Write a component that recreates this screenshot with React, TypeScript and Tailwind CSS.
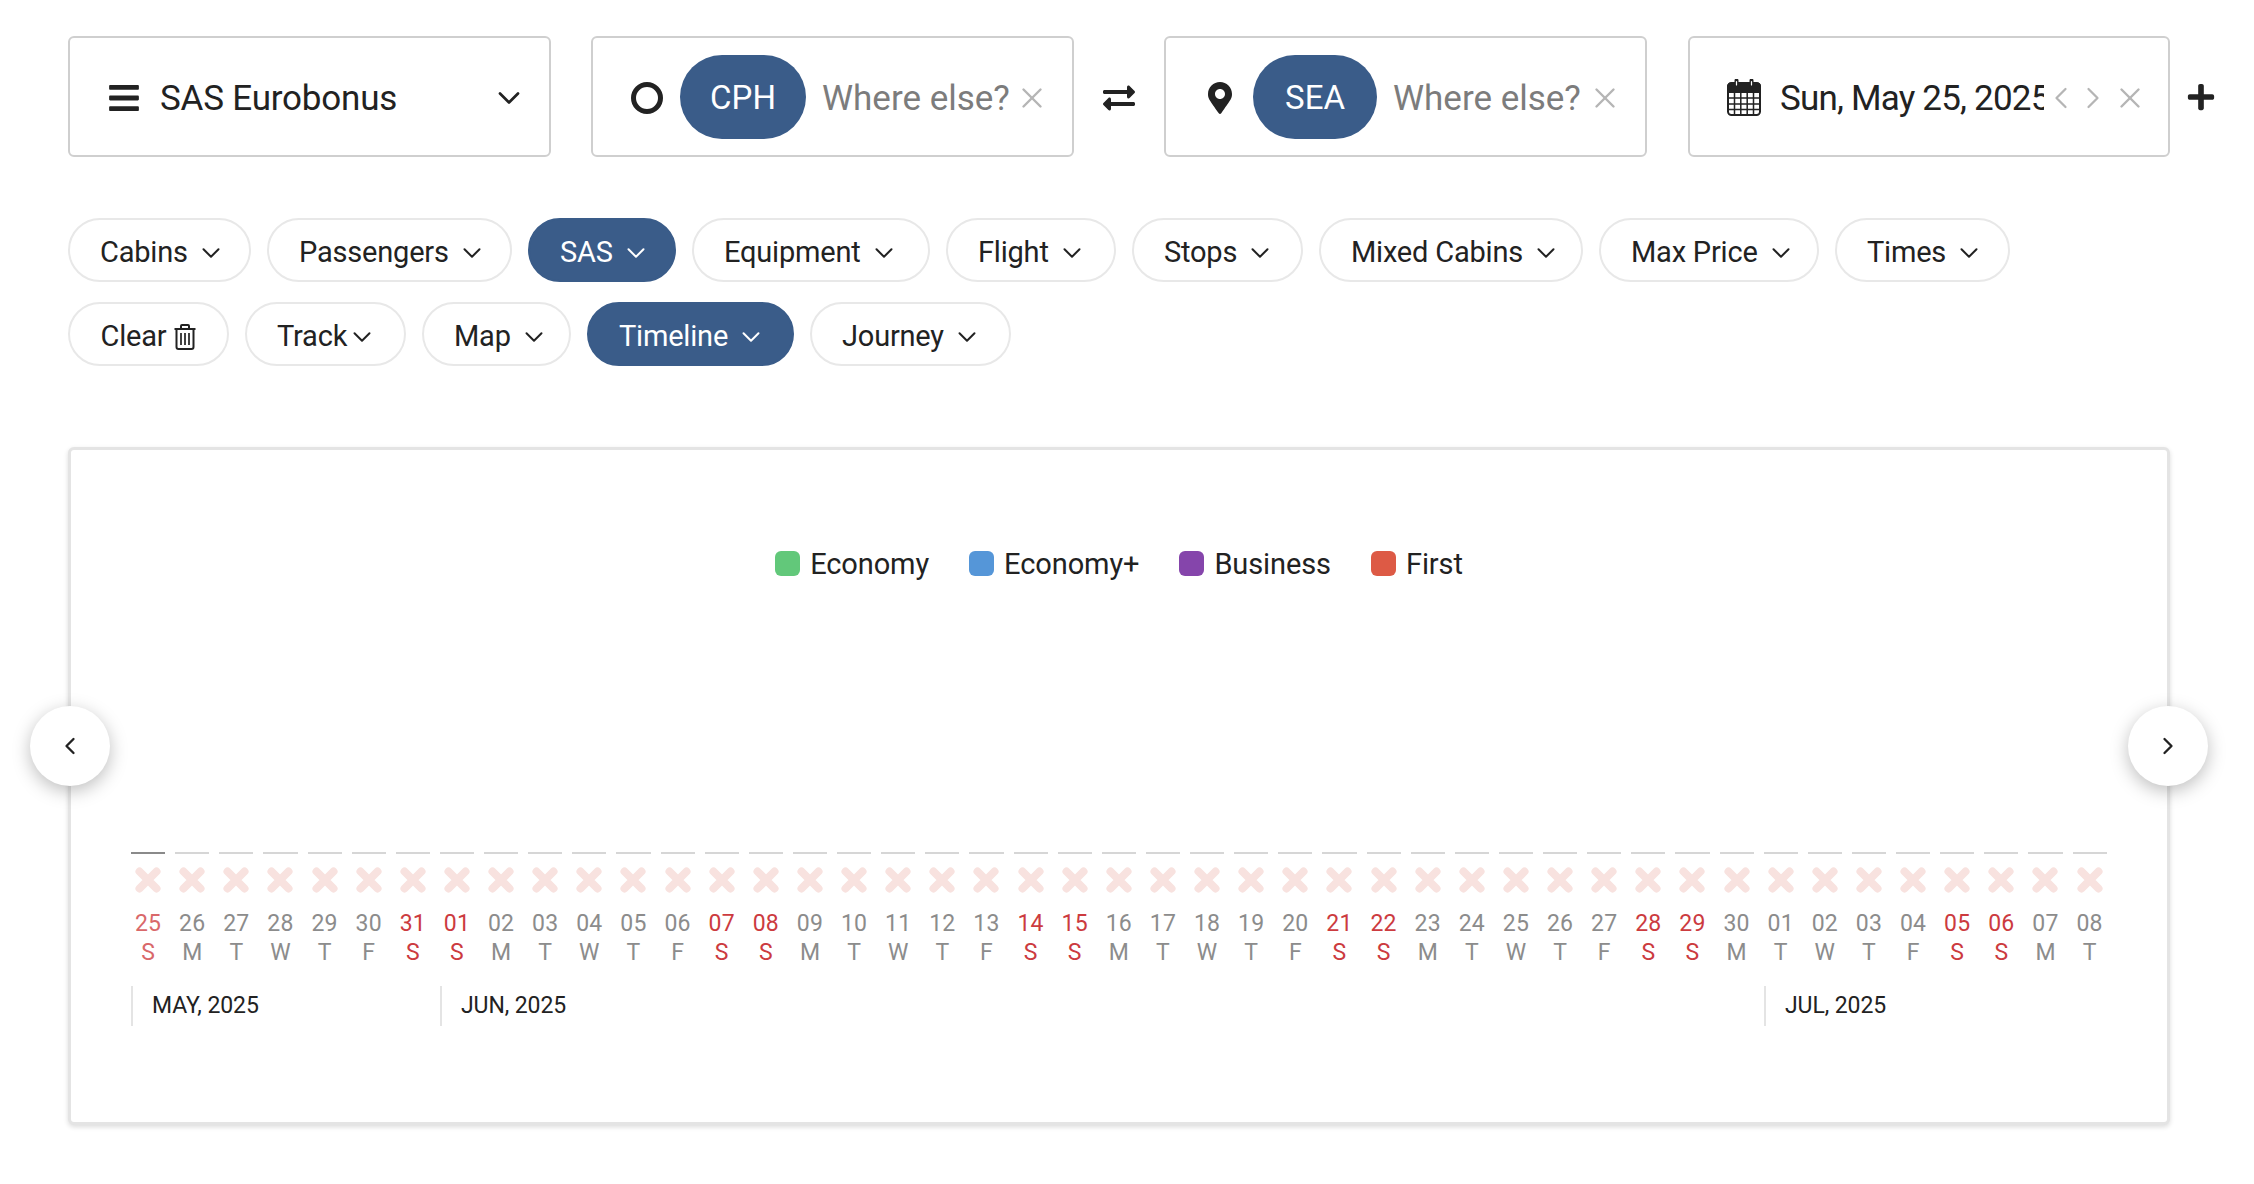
import React from "react";
import { ChevronDown, ChevronLeft, ChevronRight, X } from "lucide-react";
import { FaBars, FaExchangeAlt, FaMapMarkerAlt, FaPlus } from "react-icons/fa";

const chipsRow1 = [
  { t: "Cabins", w: "w-[183px]" },
  { t: "Passengers", w: "w-[245px]" },
  { t: "SAS", w: "w-[148px]", on: true },
  { t: "Equipment", w: "w-[238px]" },
  { t: "Flight", w: "w-[170px]" },
  { t: "Stops", w: "w-[171px]" },
  { t: "Mixed Cabins", w: "w-[264px]" },
  { t: "Max Price", w: "w-[220px]" },
  { t: "Times", w: "w-[175px]" },
];
const chipsRow2 = [
  { t: "Track", w: "w-[161px]", tight: true },
  { t: "Map", w: "w-[149px]" },
  { t: "Timeline", w: "w-[207px]", on: true },
  { t: "Journey", w: "w-[201px]" },
];

function Chip({ t, w, on, tight }: { t: string; w: string; on?: boolean; tight?: boolean }) {
  return (
    <button
      className={`${w} h-16 pl-[30px] pt-[5px] rounded-full flex items-center justify-start text-[29px] tracking-[-0.2px] border-2 ${tight ? "gap-0" : "gap-2"} ${
        on ? "bg-[#3a5c89] border-[#3a5c89] text-white" : "bg-white border-[#e8e8e8] text-[#222222]"
      }`}
    >
      <span>{t}</span>
      <ChevronDown size={30} strokeWidth={1.6} />
    </button>
  );
}

function Calendar() {
  return (
    <svg width="34" height="37" viewBox="0 0 34 37" fill="none" stroke="#222" strokeWidth="2" className="shrink-0">
      <rect x="1" y="4" width="32" height="32" rx="3.500" />
      <path d="M1 7.500a3 3 0 0 1 3-3h26a3 3 0 0 1 3 3V13H1z" fill="#222" />
      <path d="M1 19h32M1 25h32M1 30.500h32M7.500 13v22M13.800 13v22M20.200 13v22M26.500 13v22" strokeWidth="1.500" />
      <path d="M9.500 1.500v6M24.500 1.500v6" strokeWidth="4" stroke="#222" strokeLinecap="round" />
      <path d="M9.500 2.500v3.500M24.500 2.500v3.500" strokeWidth="1.200" stroke="#fff" strokeLinecap="round" />
    </svg>
  );
}

function Trash() {
  return (
    <svg width="22" height="26" viewBox="0 0 22 26" fill="none" stroke="#222" strokeWidth="2" className="shrink-0">
      <path d="M0.500 5h21M7 5V2a1 1 0 0 1 1-1h6a1 1 0 0 1 1 1v3M2.500 5v18a2 2 0 0 0 2 2h13a2 2 0 0 0 2-2V5" />
      <path d="M7 9v12M11 9v12M15 9v12" strokeWidth="1.700" />
    </svg>
  );
}

function Cross() {
  return (
    <svg width="26" height="26" viewBox="0 0 26 26" className="mt-[13px] shrink-0" fill="none" stroke="#f8e2df" strokeWidth="8" strokeLinecap="round">
      <path d="M4.500 4.500l17 17M21.500 4.500l-17 17" />
    </svg>
  );
}

const months = [
  { label: "MAY, 2025", w: "w-[309px]" },
  { label: "JUN, 2025", w: "w-[1324px]" },
  { label: "JUL, 2025", w: "w-[340px]" },
];

const letters = ["S", "M", "T", "W", "T", "F", "S"];
const days: { d: string; l: string; red: boolean; first: boolean }[] = [];
{
  const lens = [
    [25, 31],
    [1, 30],
    [1, 8],
  ];
  let i = 0;
  for (const [a, b] of lens) {
    for (let n = a; n <= b; n++) {
      const dow = i % 7;
      days.push({
        d: String(n).padStart(2, "0"),
        l: letters[dow],
        red: dow === 0 || dow === 6,
        first: i === 0,
      });
      i++;
    }
  }
}

function Legend({ c, t }: { c: string; t: string }) {
  return (
    <div className="flex items-center gap-[10px]">
      <span className={`${c} w-[25px] h-[25px] rounded-[6px] -mt-[2px]`} />
      <span className="text-[29px] text-[#222222] tracking-[-0.1px]">{t}</span>
    </div>
  );
}

function WhereElse({ icon, code, codeW }: { icon: React.ReactNode; code: string; codeW: string }) {
  return (
    <div className="w-[483px] h-[121px] pt-[2px] border-2 border-[#cfcfcf] rounded-md bg-white flex items-center pl-[36px] pr-[23px]">
      <div className="w-[36px] flex justify-center shrink-0">{icon}</div>
      <div className={`${codeW} h-[84px] ml-[15px] -mt-[2px] pt-[2px] rounded-full bg-[#3a5c89] text-white text-[33px] flex items-center justify-center shrink-0`}>
        {code}
      </div>
      <span className="ml-4 pt-[4px] text-[35px] text-[#7c7c7c] whitespace-nowrap">Where else?</span>
      <X className="ml-auto text-[#b5b5b5] shrink-0" size={34} strokeWidth={1.7} />
    </div>
  );
}

export default function App() {
  return (
    <div className="w-[2254px] h-[1184px] bg-white font-['Roboto',sans-serif] overflow-hidden pl-[68px] pt-9">
      <div className="flex items-center">
        <div className="w-[483px] h-[121px] pt-[2px] border-2 border-[#cfcfcf] rounded-md flex items-center pl-[37px] pr-[22px]">
          <FaBars size={34} className="text-[#222222] shrink-0" />
          <span className="ml-[19px] pt-[3px] text-[35px] text-[#222222] tracking-[-0.2px]">SAS Eurobonus</span>
          <ChevronDown className="ml-auto text-[#222222]" size={36} strokeWidth={1.8} />
        </div>
        <div className="ml-10">
          <WhereElse
            icon={<span className="block w-[32px] h-[32px] rounded-full border-[5px] border-[#222222]" />}
            code="CPH"
            codeW="w-[126px]"
          />
        </div>
        <div className="w-[90px] pt-[2px] flex justify-center">
          <FaExchangeAlt size={32} className="text-[#222222]" />
        </div>
        <WhereElse icon={<FaMapMarkerAlt size={32} className="text-[#222222]" />} code="SEA" codeW="w-[124px]" />
        <div className="ml-[41px] w-[482px] h-[121px] pt-[2px] border-2 border-[#cfcfcf] rounded-md flex items-center pl-[37px] pr-[21px]">
          <Calendar />
          <span className="ml-[19px] pt-[3px] w-[264px] shrink-0 overflow-hidden whitespace-nowrap text-[35px] text-[#222222] tracking-[-0.8px]">
            Sun, May 25, 2025
          </span>
          <ChevronLeft className="-ml-px text-[#b5b5b5] shrink-0" size={36} strokeWidth={1.5} />
          <ChevronRight className="-ml-[4px] text-[#b5b5b5] shrink-0" size={36} strokeWidth={1.5} />
          <X className="ml-auto text-[#b5b5b5] shrink-0" size={34} strokeWidth={1.7} />
        </div>
        <FaPlus size={30} className="ml-4 text-[#222222]" />
      </div>

      <div className="mt-[61px] flex gap-4">
        {chipsRow1.map((c) => (
          <Chip key={c.t} {...c} />
        ))}
      </div>
      <div className="mt-5 flex gap-4">
        <button className="w-[161px] h-16 pt-[5px] rounded-full flex items-center justify-center gap-2 text-[29px] tracking-[-0.2px] border-2 bg-white border-[#e8e8e8] text-[#222222]">
          <span>Clear</span>
          <Trash />
        </button>
        {chipsRow2.map((c) => (
          <Chip key={c.t} {...c} />
        ))}
      </div>

      <div className="relative mt-[81px] w-[2102px] h-[678px] bg-white rounded-md border-[3px] border-[#e4e4e4] shadow-[0_2px_5px_rgba(0,0,0,0.14)]">
        <div className="pt-[96px] flex justify-center gap-10 h-[133px]">
          <Legend c="bg-[#62c87a]" t="Economy" />
          <Legend c="bg-[#5596d8]" t="Economy+" />
          <Legend c="bg-[#8545ab]" t="Business" />
          <Legend c="bg-[#dd5a45]" t="First" />
        </div>

        <div className="mt-[269px] ml-[60px] flex gap-[10px]">
          {days.map((x, i) => (
            <div key={i} className="w-[34.14px] flex flex-col items-center shrink-0">
              <div className={`w-full h-[2px] ${x.first ? "bg-[#8a8a8a]" : "bg-[#d6d6d6]"}`} />
              <Cross />
              <div className={`mt-[16px] text-[23px] leading-[29px] tracking-[0.2px] ${x.red ? (x.first ? "text-[#d9686a]" : "text-[#cc3b3f]") : "text-[#8c8c8c]"}`}>
                {x.d}
              </div>
              <div className={`text-[23px] leading-[29px] ${x.red ? (x.first ? "text-[#d9686a]" : "text-[#cc3b3f]") : "text-[#8c8c8c]"}`}>
                {x.l}
              </div>
            </div>
          ))}
        </div>

        <div className="mt-[19px] ml-[60px] flex">
          {months.map((m) => (
            <div key={m.label} className={`${m.w} h-[40px] border-l-2 border-[#e4e4e4] pl-[19px] flex items-center text-[23px] text-[#222222] tracking-[-0.1px]`}>
              {m.label}
            </div>
          ))}
        </div>

        <button className="absolute left-[-41px] top-[256px] w-20 h-20 rounded-full bg-white shadow-[0_5px_18px_rgba(0,0,0,0.26)] flex items-center justify-center text-[#222222]">
          <ChevronLeft size={28} strokeWidth={2} />
        </button>
        <button className="absolute right-[-41px] top-[256px] w-20 h-20 rounded-full bg-white shadow-[0_5px_18px_rgba(0,0,0,0.26)] flex items-center justify-center text-[#222222]">
          <ChevronRight size={28} strokeWidth={2} />
        </button>
      </div>
    </div>
  );
}
